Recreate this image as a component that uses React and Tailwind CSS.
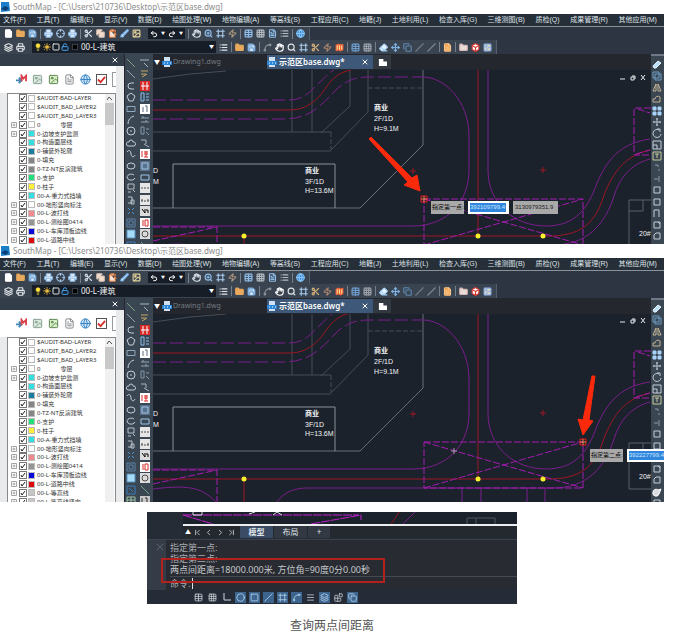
import React from 'react';
import clsx from 'clsx';
import {
  Blocks, Box, Brush, Circle, ClipboardPaste, Copy, Crosshair, Eraser, File, FileText, Folder, Frame,
  Globe, Grid3x3, Hand, Image, Layers, Lightbulb, List, LockOpen, Map, Menu, Move, Printer, Redo2,
  Save, Scissors, Search, Slash, Spline, Square, Sun, Table, Undo2, X, Zap, ZoomIn,
  ChevronFirst, ChevronLast, ChevronLeft, ChevronRight,
} from 'lucide-react';

const MENUS = [
  '文件(F)', '工具(T)', '编辑(E)', '显示(V)', '数据(D)', '绘图处理(W)', '地物编辑(A)', '等高线(S)',
  '工程应用(C)', '地籍(J)', '土地利用(L)', '检查入库(G)', '三维测图(B)', '质检(Q)', '成果管理(R)', '其他应用(M)',
];

const LAYERS = [
  { name: '$AUDIT-BAD-LAYER', color: '#ffffff' },
  { name: '$AUDIT_BAD_LAYER2', color: '#ffffff' },
  { name: '$AUDIT_BAD_LAYER3', color: '#ffffff' },
  { name: '0', alias: '零层', color: '#ffffff', group: true },
  { name: '0-边坡支护监测', color: '#35dfe0', group: true },
  { name: '0-构造面层线', color: '#35dfe0' },
  { name: '0-铺装外轮廓', color: '#1c7c9c' },
  { name: '0-填充', color: '#858585' },
  { name: '0-TZ-NT反演建筑', color: '#858585' },
  { name: '0-支护', color: '#22df7c' },
  { name: '0-柱子', color: '#fbef3a' },
  { name: '00-A-重力式挡墙', color: '#35dfe0' },
  { name: '00-地形竖向标注', color: '#ffffff', group: true },
  { name: '00-L-波打线', color: '#f08a8e', group: true },
  { name: '00-L-测绘图0414', color: '#959595', group: true },
  { name: '00-L-车库顶板边线', color: '#0808d8', group: true },
  { name: '00-L-道路中线', color: '#dc0a0a', group: true },
  { name: '00-L-等高线', color: '#c6c6c6', group: true },
  { name: '00-L-等高线竖向', color: '#c6c6c6', group: true },
];

// '|' is a separator between groups of buttons
const FILE_TOOLS = [
  [File, 'fill-white text-white'], [Folder, 'fill-[#e9a95c] text-[#e9a95c]'], [Save, 'fill-[#dbe8f5] text-[#6fa3d8]'], '|',
  [Printer, 'fill-[#e4eefa] text-[#8dbbe8]'], [Crosshair, 'text-[#a9cbee]'], [Printer, 'fill-[#e4eefa] text-[#8dbbe8]'], '|',
  [Scissors, 'text-[#d5dde6]'], [Copy, 'fill-[#f2dccb] text-[#d9c3b4]'], [ClipboardPaste, 'fill-[#f7e3d4] text-[#e07a3c]'],
  [Brush, 'fill-[#cfe6fb] text-[#7db7ee]'], [Image, 'text-[#e4d29a]'],
];
const VIEW_TOOLS = [
  [Hand, 'text-[#d5dde6]'], [ZoomIn, 'text-[#8dbbe8]'], [Frame, 'text-[#a9cbee]'], [Zap, 'text-[#a5917c]'], '|',
  [Table, 'text-[#8fbbe6]'], [Grid3x3, 'text-[#b4bac2]'], [FileText, 'text-[#8fbbe6]'], [List, 'text-[#b4bac2]'], '|',
  [Globe, 'fill-[#2f86d8] text-[#8cc6f6]'],
];
const LAYER_TOOLS = [
  [List, 'text-[#e0e4e8]'], '|', [Folder, 'fill-[#e9a95c] text-[#e9a95c]'], [Save, 'fill-[#dbe8f5] text-[#6fa3d8]'], '|',
  [Spline, 'text-[#8d939a]'], [Hand, 'text-white'], [Search, 'text-[#e0e4e8]'], [Frame, 'text-[#a9cbee]'],
  [Scissors, 'text-[#d8b27a]'], [Zap, 'text-[#a5816c]'], [Map, 'fill-[#f6e08a] text-[#f2603c]'], '|',
  [Table, 'text-[#6e9dcb]'], [Grid3x3, 'text-[#9aa1aa]'], '|',
  [Eraser, 'fill-[#e6f3fd] text-[#a5d0f5]'], [Move, 'text-[#7fb2e2]'], [Copy, 'text-[#5f87ad]'], [Slash, 'text-[#6e7a88]'],
  [Slash, 'text-[#7d8792]'], '|', [FileText, 'fill-[#ef9a3e] text-[#f6c48c]'], '|',
  [Folder, 'fill-[#e8dcd8] text-[#d8b6b2]'], [Box, 'fill-white text-[#d9342e]'], [Image, 'fill-[#e4d9b8] text-[#8fb3ea]'],
];

const Line = () => <path d="M1 1 9 9" />;
const DRAW_TOOLS = [
  { el: <Line />, c: 'text-[#7da07f]' },
  { el: <Line />, c: 'text-[#8fa3b5]' },
  { el: <path d="M8 2H5a3 3 0 0 0 0 6h3" /> },
  { el: <path d="M5 1 9 4 7 9H3L1 4Z" /> },
  { el: <path d="M1 2.5h8v5H1Z" />, c: 'text-[#8fa9c0]' },
  { el: <path d="M2 9Q2 3 8 1" /> },
  { el: <><circle cx="5" cy="5" r="4" /><path d="M4 5h2" /></> },
  { el: <path d="M2 8a2 2 0 0 1 1-4 2 2 0 0 1 4 0 2 2 0 0 1 1 4Z" /> },
  { el: <path d="M1 3c2-3 4-1 4 2s3 4 4 1" /> },
  { el: <ellipse cx="5" cy="5" rx="4" ry="3" /> },
  { el: <path d="M8 3A4 3 0 1 0 9 6" /> },
  { el: <path d="M2 1h6v5H2ZM2 9h3M7 7l2 2" />, c: 'text-[#b8c0c8]' },
  { el: <path d="M2 2h4v6H2M5 5h3v4H5Z" />, c: 'text-[#b8c0c8]' },
  { el: <path d="M2 2l2 2M8 2 6 4M2 8l2-2M8 8 6 6" />, c: 'text-[#4f96d4]' },
  { el: <path d="M1 1h8v8H1ZM3 3h4v4H3Z" />, c: 'text-[#5d84aa]' },
  { el: <path d="M1 1h8v8H1Z" fill="#a5dbf6" />, c: 'text-[#5f93c2]' },
  { el: <path d="M1 1h8v8H1ZM3 3l4 4" />, c: 'text-[#3f7cba]' },
  { el: <path d="M1 1h8v8H1ZM1 4h8M5 1v8" />, c: 'text-[#9fc3a4]' },
];

const SURVEY_TOOLS = [
  { el: <path d="M0 2h9M4 5l4 4" />, c: 'text-[#aab6c2]' },
  { el: <path d="M1 2h7M1 5h5M2 8l5-3" />, c: 'text-[#c2a664]' },
  { tile: 'bg-[#d92a2a] text-white', el: <path d="M3 1v8M7 1v8M1 5h8" /> },
  { el: <path d="M1 1h3v8H1ZM6 2h3M6 5h3M6 8h3" />, c: 'text-[#8cc1ef]' },
  { tile: 'bg-white text-[#5a6b7c]', el: <path d="M3 3v5M5 2h2v6" /> },
  { el: <path d="M1 3h8M1 7h8M3 1v2M6 5v2" />, c: 'text-[#92a3b4]' },
  { el: <path d="M1 1h3v7H1ZM6 3h3M6 6l3 3" />, c: 'text-[#8496a8]' },
  { el: <path d="M1 2h5M6 2v4M4 6l5 3" />, c: 'text-[#a8b6c4]' },
  { tile: 'bg-white text-[#d92a2a]', el: <path d="M2 2v6M4 3h4M4 5h4M4 8h4M6 2v6" /> },
  { tile: 'bg-[#567391] text-[#a9c2da]', el: <path d="M2 2h6v6H2Z" /> },
  { el: <path d="M1 3h8v5H1Z" />, c: 'text-[#9dc4e8]' },
  { tile: 'bg-[#e6e6e6] text-[#4c4c4c]', el: <path d="M1 5h2M4 5h2M7 5h2" /> },
  { tile: 'bg-[#e6e6e6] text-[#4c4c4c]', el: <path d="M1 6h2M4 6h2M7 6h2M2 4v2M8 4v2" /> },
  { tile: 'bg-[#dcdcdc] text-black', el: <path d="M2 3l3 4M5 3v4M6 4h2v3" /> },
  { tile: 'bg-white text-[#d92a2a]', el: <path d="M3 2v6M5 2h3v6H5Z" /> },
  { tile: 'bg-[#dcdcdc] text-[#4c4c4c]', el: <circle cx="5" cy="5" r="3" /> },
  { el: <Line />, c: 'text-[#71a388]' },
  { tile: 'bg-[#c8c8c8] text-[#303030]', el: <path d="M2 2v4M5 2h2v5" /> },
];

const MODIFY_TOOLS = [
  { el: <path d="M2 8 1 6 6 1l3 2-5 5Z" fill="#b9e0f8" />, c: 'text-[#e9f4fb]' },
  { el: <path d="M1 1h6v6H1ZM3 3h6v6H3Z" />, c: 'text-[#6d9cc4]' },
  { el: <path d="M4 1v7H1ZM6 1v7h3Z" />, c: 'text-[#c4b394]' },
  { el: <path d="M1 8h7V3a3 3 0 0 0-5 2H1Z" />, c: 'text-[#c4b394]' },
  { el: <path d="M1 1h3v3H1ZM6 1h3v3H6ZM1 6h3v3H1ZM6 6h3v3H6Z" fill="#a9d2f8" />, c: 'text-[#a9d2f8]' },
  { el: <path d="M5 1v8M1 5h8M4 2h2M4 8h2M2 4v2M8 4v2" />, c: 'text-[#b9c2cb]' },
  { el: <path d="M7 2a4 4 0 1 0 2 4M5 1h3v3" /> },
  { el: <path d="M1 1h8v8H1ZM1 5h4v4" /> },
  { el: <path d="M1 1h8v8H1ZM5 3v4M3 3h4" />, c: 'text-[#c6c99e]' },
  { el: <path d="M3 2h3v2M7 6v2" />, c: 'text-[#8c98a4]' },
  { el: <path d="M2 5h4M7 2v6" />, c: 'text-[#8c98a4]' },
  { el: <path d="M2 2h6v6H2Z" /> },
  { el: <path d="M2 2h6v6H2Z" /> },
  { el: <path d="M2 9V2h5v7" /> },
  { el: <path d="M2 2h6v6H2ZM6 2l2 2" /> },
  { el: <path d="M2 8V4l2-2h4v6Z" /> },
  { el: <path d="M1 5a3 3 0 0 1 5-2l3-1-2 5a3 3 0 0 1-6-2Z" fill="#d8dcdf" />, c: 'text-white' },
  { el: <path d="M2 2h6v6H2Z" /> },
];

const STATUS_TOOLS = [
  [Table], [Grid3x3], [null], [Circle, true], [Square, true], [Slash, true], [Frame, true],
  [Spline, true], [Menu], [Layers, true], [Blocks], [Copy, true],
];

const Palette = ({ label, tools }) => (
  <div aria-label={label} className="flex h-[208px] w-3 shrink-0 flex-col items-center justify-between pt-1">
    {tools.map((tool, i) => (
      <button key={i} aria-label={`${label} ${i + 1}`} className={clsx('size-[10px] shrink-0', tool.tile || tool.c || 'text-[#c3ced8]')}>
        <svg viewBox="0 0 10 10" fill="none" stroke="currentColor" className="size-[10px]">{tool.el}</svg>
      </button>
    ))}
  </div>
);

const ToolGroup = ({ tools }) => tools.map((tool, i) => {
  if (tool === '|') return <span key={i} className="h-[10px] w-px shrink-0 bg-[#76808c]" />;
  const [Icon, color] = tool;
  return (
    <button key={i} aria-label={Icon.displayName} className="shrink-0">
      <Icon size={9} strokeWidth={3} className={color} />
    </button>
  );
});

const LayerRow = ({ layer }) => (
  <li className="flex h-2 items-center">
    <span className="mr-[2px] flex w-[6px] items-center">
      {layer.group && (
        <svg viewBox="0 0 6 6" className="size-[6px]" fill="#fff" stroke="#a5a5a5">
          <path d="M.5.5h5v5h-5ZM1.5 3h3M3 1.5v3" />
        </svg>
      )}
    </span>
    <label className="flex items-center text-[6px] leading-[8px] whitespace-pre text-[#333]">
      <span className="grid size-2">
        <input type="checkbox" defaultChecked className="col-start-1 row-start-1 size-2 appearance-none border border-[#777] bg-white" />
        <svg viewBox="0 0 8 8" className="pointer-events-none col-start-1 row-start-1 size-2" fill="none" stroke="#222">
          <path d="M2 4l1 2 3-4" />
        </svg>
      </span>
      <span className="mr-[2px] ml-px size-[7px] border border-[#bbb]" style={{ backgroundColor: layer.color }} />
      {layer.name}
      {layer.alias && <span className="pl-5">{layer.alias}</span>}
    </label>
  </li>
);

const LayerPanel = ({ layers, listClass }) => (
  <aside className="flex w-[124px] shrink-0 flex-col bg-[#e9eaec]">
    <div className="flex h-3 shrink-0 items-center justify-end bg-[#333d4a] pr-[5px] text-white">
      <button aria-label="关闭"><X size={8} strokeWidth={3} /></button>
    </div>
    <div className="mr-2 flex h-[27px] shrink-0 items-center gap-[5px] bg-white pl-4">
      <button aria-label="合并">
        <svg viewBox="0 0 12 12" className="size-[11px]">
          <path d="M0 7h5M3 4l3 3-3 3" fill="none" stroke="#3f86b4" strokeWidth="2" />
          <path d="M6 8V2l2 3 3-3v6" fill="none" stroke="#d9414b" strokeWidth="2" />
        </svg>
      </button>
      <button aria-label="图片"><Image size={11} className="fill-[#dbe7dd] text-[#7d9a8b]" /></button>
      <button aria-label="导出图片"><Image size={11} className="fill-[#d9efc8] text-[#4f7d46]" /></button>
      <button aria-label="列表"><FileText size={11} className="text-[#7b7f83]" /></button>
      <button aria-label="刷新"><Globe size={11} className="fill-[#cfe4f6] text-[#2f7fc4]" /></button>
      <button aria-label="全选" className="border border-[#555]">
        <svg viewBox="0 0 10 10" className="size-[9px]" fill="none" stroke="#d8322c" strokeWidth="2"><path d="M1 5l3 3 5-6" /></svg>
      </button>
      <span className="h-[15px] w-[5px] border border-r-0 border-[#999]" />
    </div>
    <div className="mr-2 ml-[7px] flex flex-1 border border-b-0 border-[#888] bg-white pl-[3px]">
      <ul className={clsx('flex min-w-0 flex-1 flex-col justify-between overflow-hidden', listClass)}>
        {layers.map((layer) => <LayerRow key={layer.name} layer={layer} />)}
      </ul>
      <div className="mr-px w-[9px] bg-[#f0f0f0]">
        <svg viewBox="0 0 9 9" className="size-[9px]" fill="none" stroke="#555"><path d="M2 6l2-3 3 3" /></svg>
        <div className="h-[22px] bg-[#c8c8c8]" />
      </div>
    </div>
  </aside>
);

const CanvasDrawing = ({ height, offset, target, cursor, arrow }) => (
  <svg width="100%" height={height} className="block bg-[#1b222c]" fill="none">
    <g transform={`translate(-153 ${-70 - offset})`}>
      {/* buildings */}
      <g stroke="#474d56">
        <path d="M153 79 190 74 226 71" />
        <path d="M292 70v62M312 70v62M350 70v36l-29 27M368 70v42l-37 38M153 132h178M153 151h178" />
        <path d="M331 132v18M368 88h55" strokeDasharray="5 2" />
      </g>
      <path d="M423 70v75l-63 63H153" stroke="#696f76" />
      <path d="M173 208v-44h162v44" stroke="#8b9096" />
      <path d="M629 246v-35h14v-11h8M629 211v-11h14M629 246h22" stroke="#596069" />

      {/* road edges */}
      <g stroke="#7b1e8c">
        <path d="M153 100h136c17 0 24-12 31-18s8-9 14-12M153 119h130c31 0 41-18 56-32 10-7 16-10 30-10h54" strokeDasharray="13 4" />
        <path d="M423 77c20 0 46 22 46 60v33c0 32-22 56-56 56H153" />
        <path d="M488 70v100c0 34 26 56 58 56 30 0 42-18 51-43 12-28 27-40 53-44" />
        <path d="M153 246c40-5 50 0 64 14M276 260c8-11 18-15 32-15h245c32 0 52-18 62-52 7-20 20-30 35-34" />
        <path d="M462 245v20M481 245v20M527 245v20M545 245v20" />
      </g>

      {/* centre lines */}
      <g stroke="#9c1622">
        <path d="M153 110h136c26 0 34-20 42-29 7-7 11-9 20-11" />
        <path d="M478 70v165M244 235v30" />
        <path d="M153 236h395c30 0 46-10 55-38 10-28 24-43 47-48" />
        <path d="M410 171h6M413 168v6M540 170h6M543 167v6" />
      </g>

      {/* boundaries */}
      <g stroke="#a41bb0" strokeDasharray="7 2">
        <path d="M424 199h159v46H424ZM424 199l159 46M424 245l159-46" />
        <path d="M153 227h64v34M153 241l64-14" />
        <path d="M651 108h-17v47h17M638 109l12 4M636 154l14-4" />
      </g>

      <g fill="#f7f02c">
        <circle cx="244" cy="236" r="2.5" />
        <circle cx="478" cy="236" r="2.5" />
        <circle cx="543" cy="236" r="2.5" />
      </g>

      <g fill="#f4f5f6" className="font-['Liberation_Sans','Noto_Sans_CJK_SC',sans-serif] text-[7px]">
        <text x="374" y="110" className="font-bold">商业</text>
        <text x="374" y="121">2F/1D</text>
        <text x="374" y="131">H=9.1M</text>
        <text x="305" y="173" className="font-bold">商业</text>
        <text x="305" y="184">3F/1D</text>
        <text x="305" y="193">H=13.6M</text>
        <text x="639" y="236">20#</text>
        <text x="153" y="173">D</text>
        <text x="153" y="184">M</text>
      </g>

      {cursor && <path d={`M${cursor[0] - 3} ${cursor[1]}h6M${cursor[0]} ${cursor[1] - 3}v6`} stroke="#a898a8" />}
      <g transform={`translate(${target[0]} ${target[1]})`}>
        <path d="M-3-3h6v6h-6Z" stroke="#ee1c1c" strokeWidth="1" />
        <path d="M-3 0h6M0-3v6" stroke="#e8844a" />
      </g>
      <polygon points={arrow} fill="#fb2a0c" stroke="#fb2a0c" strokeLinejoin="round" />

      {/* child window buttons */}
      <path d="M620 79h5M631 77h3v3h-3ZM632 76h3v3M641 75l4 5M645 75l-4 5" stroke="#e8eaec" />
    </g>
  </svg>
);

const PointInput = ({ label, value, second, className }) => (
  <div className={clsx("absolute z-10 flex items-stretch gap-1 font-['Liberation_Sans','Noto_Sans_CJK_SC',sans-serif] text-[6px] leading-[13px]", className)}>
    <label className="w-[33px] bg-[#a9a9a9] pl-px whitespace-nowrap text-black" htmlFor={value}>{label}</label>
    <span className="flex w-[41px] items-center bg-white px-[2px]">
      <input id={value} defaultValue={value} className="h-[9px] w-[36px] bg-[#2f86dc] text-[#cfe6ff]" />
    </span>
    {second && <input aria-label="Y" defaultValue={second} className="w-[45px] bg-[#a9a9a9] pl-[2px] text-[#222]" />}
  </div>
);

const DwgIcon = () => (
  <svg viewBox="0 0 10 10" className="size-[10px] shrink-0">
    <path d="M2 0h6v10H2Z" fill="#cfe2f5" />
    <path d="M0 4h10v4H0Z" fill="#2c86d8" />
    <path d="M2 6h1M5 6h1M8 6h1" stroke="#fff" />
  </svg>
);

const DocumentTabs = () => (
  <div className="flex h-4 items-center bg-[#24282e] leading-[14px]">
    <span className="w-[9px] pl-px text-[6px] text-white">▼</span>
    <button className="flex w-[105px] items-center gap-px text-[7px] text-[#747a82]">
      <DwgIcon />Drawing1.dwg
    </button>
    <button className="flex h-[14px] w-[106px] items-center gap-[2px] bg-[#3d5878] pr-1 text-[8px] font-semibold text-white">
      <DwgIcon />
      <span className="flex-1 text-left whitespace-nowrap">示范区base.dwg*</span>
      <X size={8} strokeWidth={3} />
    </button>
    <button aria-label="新建" className="flex h-[14px] w-[18px] items-center justify-center bg-[#333940]">
      <svg viewBox="0 0 10 10" className="size-[9px]"><path d="M1 1h5v3h4v5H1Z" fill="#fff" /></svg>
    </button>
  </div>
);

const MapWindow = ({ id, bodyClass, layers, listClass, children }) => (
  <section className="font-['Noto_Sans','Noto_Sans_CJK_SC',sans-serif]">
    <header className="flex h-[14px] items-center gap-[3px] bg-white text-[8px] leading-[14px] text-[#8c8c8c]">
      <svg viewBox="0 0 10 10" className="size-[10px]">
        <path d="M1 0h8l1 9-9 1Z" fill="#1a7fc8" />
        <path d="M1 7l4-3 4 2-3 3Z" fill="#0b3f78" />
      </svg>
      <h2>SouthMap - [C:\Users\210736\Desktop\示范区base.dwg]</h2>
    </header>

    <nav className="flex h-[13px] items-center justify-between border-b border-[#8a929b] bg-[#262e38] pr-[7px] pl-[3px] font-['Liberation_Sans','Noto_Sans_CJK_SC',sans-serif] text-[7px] leading-3 whitespace-nowrap text-[#dfe3e7]">
      {MENUS.map((menu) => <button key={menu}>{menu}</button>)}
    </nav>

    <div className="flex h-[13px] bg-[#2c3541]">
      <div className="flex items-center gap-[3px] border-r border-[#555f6c] bg-[#3a4451] px-1">
        <ToolGroup tools={FILE_TOOLS} />
        <div className="ml-1 flex h-[11px] items-center gap-[3px] bg-[#171d26] px-[2px] text-white">
          <button aria-label="撤销"><Undo2 size={8} strokeWidth={3} /></button>
          <span className="text-[4px]">▼</span>
          <button aria-label="重做"><Redo2 size={8} strokeWidth={3} /></button>
          <span className="text-[4px]">▼</span>
        </div>
        <span className="h-[10px] w-px bg-[#76808c]" />
        <ToolGroup tools={VIEW_TOOLS} />
      </div>
    </div>

    <div className="flex h-[14px] bg-[#2c3541]">
      <div className="flex items-center gap-[3px] border-r border-[#555f6c] bg-[#3a4451] px-1">
        <button aria-label="图层特性" className="text-[#dfe3e7]"><Layers size={9} strokeWidth={3} /></button>
        <button aria-label="图层" className="text-[#dfe3e7]"><Printer size={9} strokeWidth={3} /></button>
        <div className="ml-1 flex h-[12px] w-[184px] items-center gap-px bg-[#171d26] pl-[2px]">
          <Lightbulb size={8} fill="#ffe23d" className="text-[#ffe23d]" />
          <Sun size={8} fill="#e9b93e" strokeWidth={3} className="text-[#e9b93e]" />
          <Square size={8} strokeWidth={3} className="text-[#dfe3e7]" />
          <LockOpen size={8} strokeWidth={3} className="text-[#4aa3ee]" />
          <span className="mx-[2px] size-[6px] border border-[#3a3f46] bg-black" />
          <label htmlFor={`${id}-layer`} className="sr-only">当前图层</label>
          <select id={`${id}-layer`} className="h-[12px] min-w-0 flex-1 appearance-none text-[8px] leading-[12px] text-[#f0f2f4]">
            <option>00-L-建筑</option>
          </select>
          <span className="pr-[2px] text-[5px] text-white">▼</span>
        </div>
        <ToolGroup tools={LAYER_TOOLS} />
      </div>
    </div>

    <div className={clsx('flex overflow-hidden bg-[#24282e]', bodyClass)}>
      <LayerPanel layers={layers} listClass={listClass} />
      <div className="ml-px flex w-7 shrink-0 gap-[2px] bg-[#3b4653]">
        <Palette label="绘图" tools={DRAW_TOOLS} />
        <Palette label="测量" tools={SURVEY_TOOLS} />
      </div>
      <div className="min-w-0 flex-1">
        <DocumentTabs />
        <div className="relative">{children}</div>
      </div>
      <div className="w-[13px] shrink-0 border-t-2 border-[#6e7886] bg-[#3b4653]">
        <Palette label="修改" tools={MODIFY_TOOLS} />
      </div>
    </div>
  </section>
);

const CommandPanel = () => (
  <section className="mx-auto mt-[10px] max-w-[370px] bg-[#262c36] font-['Noto_Sans','Noto_Sans_CJK_SC',sans-serif]">
    <div className="ml-9 border-b-2 border-[#eceef0] bg-[#1b222c]">
      <svg width="100%" height="12" className="block" fill="none">
        <path d="M0 3h176M0 3l30 9M128 12l50-9v5" stroke="#c020cc" strokeDasharray="9 1" />
        <path d="M10 0v3h9V0M66 2l6-2M90 3l4-3 5 3" stroke="#d8dade" />
        <path d="M208 12q6-8 8-12" stroke="#8f1622" />
        <path d="M220 12q8-8 12-12" stroke="#731c84" />
        <path d="M284 12V6h28v6M293 6v6" stroke="#4d545e" />
      </svg>
    </div>
    <div className="ml-9 flex h-3 items-center bg-[#24282f] text-[8px] leading-3 text-[#dfe3e7]">
      <span className="flex w-[57px] items-center justify-between pr-1 pl-[2px]">
        <button aria-label="展开" className="text-[6px] text-white">▲</button>
        <button aria-label="第一个"><ChevronFirst size={9} /></button>
        <button aria-label="上一个"><ChevronLeft size={9} /></button>
        <button aria-label="下一个"><ChevronRight size={9} /></button>
        <button aria-label="最后一个"><ChevronLast size={9} /></button>
      </span>
      <button className="w-[33px] bg-[#3b4b66] font-bold">模型</button>
      <button className="ml-px w-[33px] bg-[#333943]">布局</button>
      <button className="ml-px w-[22px] bg-[#333943]">+</button>
    </div>
    <div className="relative mt-px flex border-t border-[#3b424d] bg-[#282b31] text-[9px] leading-[11px] text-[#a9adb3]">
      <div className="flex w-[19px] shrink-0 justify-end bg-[#363c47] pt-px text-[#858d99]">
        <X size={12} strokeWidth={1} />
      </div>
      <div className="flex-1 pt-[2px] pl-1">
        <p>指定第一点:</p>
        <p>指定第二点:</p>
        <p className="text-[#c6c9cd]">两点间距离=18000.000米, 方位角=90度0分0.00秒</p>
        <div className="mt-px flex h-[14px] items-center gap-[2px] border-t border-[#454a52]">
          <label htmlFor="command">命令:</label>
          <input id="command" className="h-[11px] min-w-0 flex-1 border-l border-[#dfe3e7]" />
        </div>
      </div>
      <div className="absolute top-[18px] left-[14px] h-[25px] w-[224px] border-2 border-[#b3211d]" />
    </div>
    <div className="flex h-[14px] items-center gap-[3px] bg-[#252c37] pl-[46px]">
      {STATUS_TOOLS.map(([Icon, active], i) => (
        <button key={i} aria-label={`状态 ${i + 1}`} className={clsx('flex size-[11px] items-center justify-center', active ? 'bg-[#3c6590] text-[#c3dcf2]' : 'text-[#d3d7dc]')}>
          {Icon ? <Icon size={9} strokeWidth={2} /> : (
            <svg viewBox="0 0 10 10" className="size-[10px]" fill="none" stroke="currentColor"><path d="M2 1v7h7" /></svg>
          )}
        </button>
      ))}
    </div>
  </section>
);

export default function App() {
  return (
    <main className="min-h-screen bg-white pr-[14px]">
      <MapWindow id="first" bodyClass="h-[190px]" layers={LAYERS.slice(0, 17)} listClass="h-[150px]">
        <CanvasDrawing
          height={174}
          offset={0}
          target={[424, 199]}
          arrow="369,139 371,137 412,178 417,175 420,191 404,185 408,182"
        />
        <PointInput label="指定第一点:" value="392109799.4" second="3130979351.9" className="top-[131px] left-[278px]" />
      </MapWindow>
      <MapWindow id="second" bodyClass="h-[204px]" layers={LAYERS} listClass="h-[168px]">
        <CanvasDrawing
          height={188}
          offset={1}
          target={[583, 199]}
          cursor={[454, 208]}
          arrow="592,133 595,133 589,177 593,178 583,192 578,176 583,177"
        />
        <PointInput label="指定第二点:" value="392227799.4" className="top-[135px] left-[437px]" />
      </MapWindow>
      <CommandPanel />
      <p className="mt-3 text-center font-['Noto_Sans_CJK_SC',sans-serif] text-[12px] leading-[18px] text-[#555]">查询两点间距离</p>
    </main>
  );
}
